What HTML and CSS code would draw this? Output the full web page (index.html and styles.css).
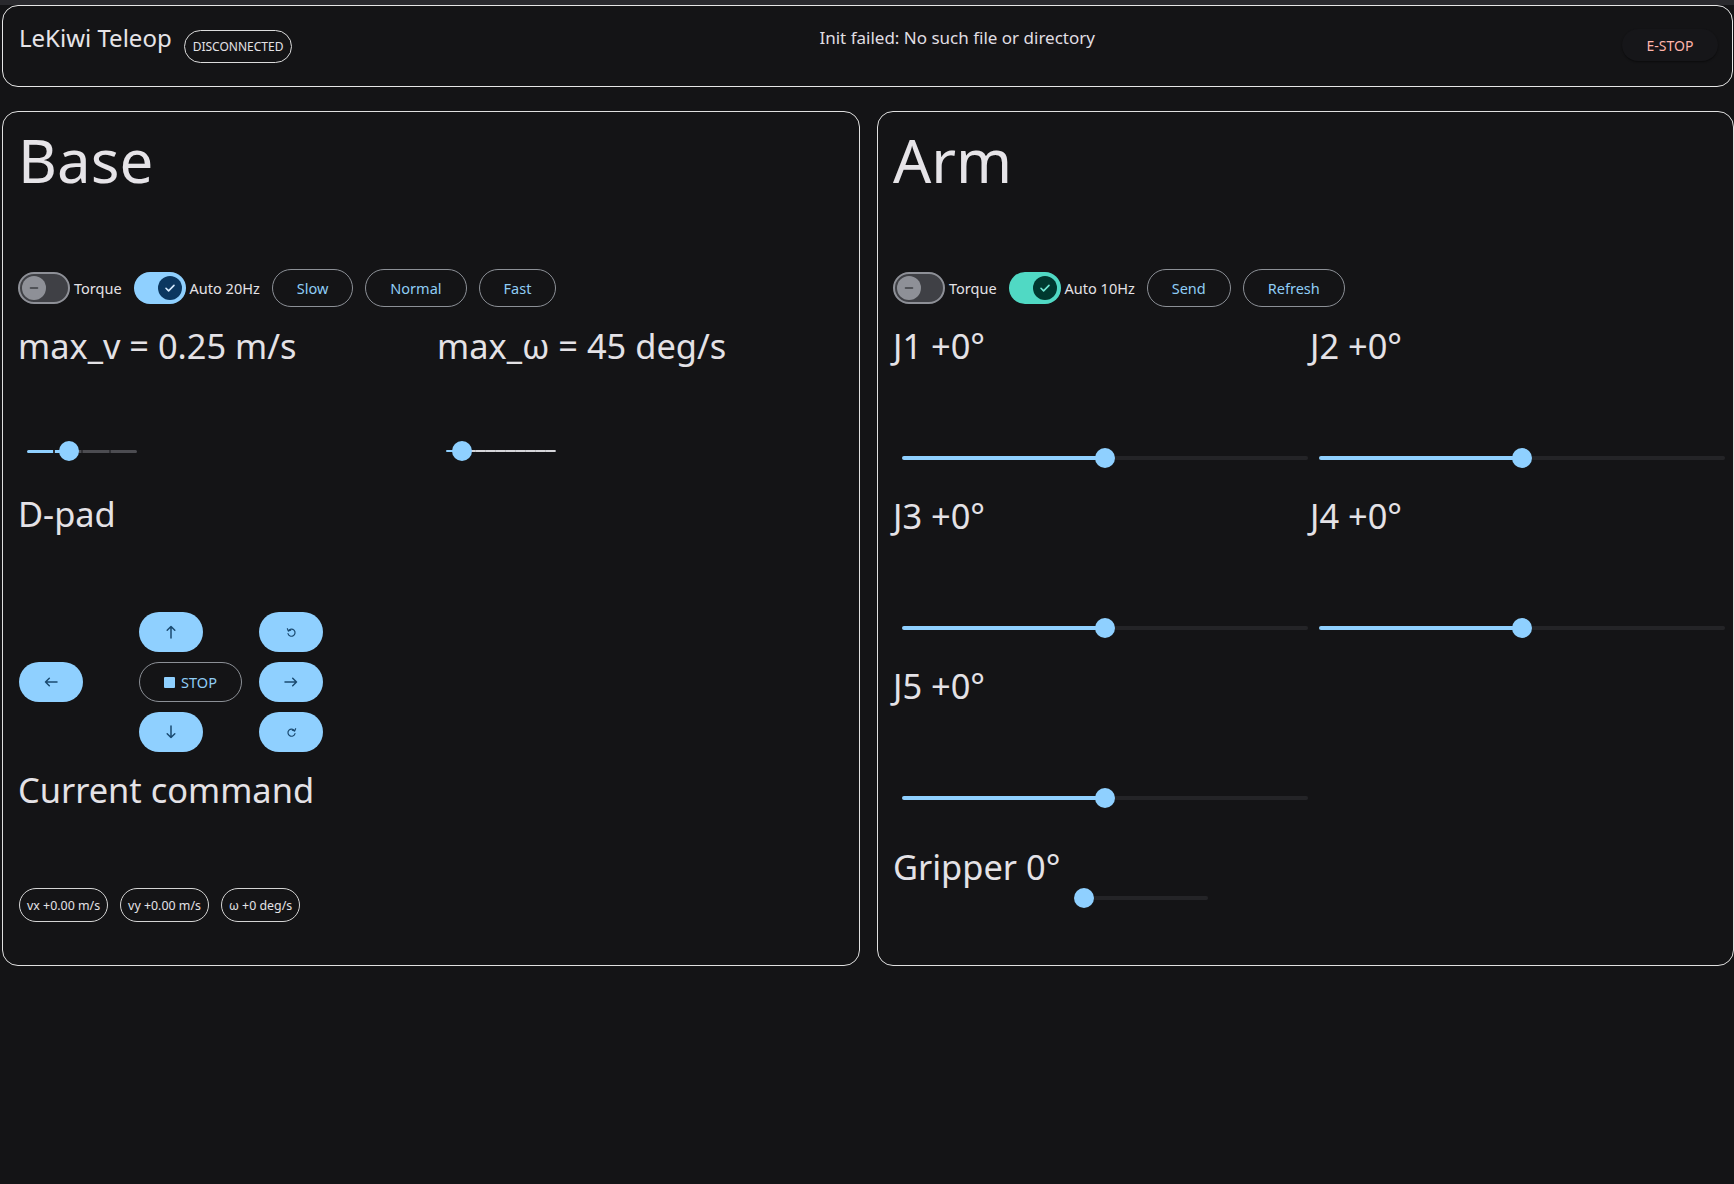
FILE: index.html
```html
<!DOCTYPE html>
<html lang="en">
<head>
<meta charset="utf-8">
<title>LeKiwi Teleop</title>
<link rel="stylesheet" href="styles.css">
</head>
<body>
<div class="app">
  <header class="topbar">
    <div class="brand">
      <span class="title">LeKiwi Teleop</span>
      <span class="badge">DISCONNECTED</span>
    </div>
    <div class="status">Init failed: No such file or directory</div>
    <button class="estop">E-STOP</button>
  </header>

  <main class="panels">
    <section class="panel">
      <h1 class="panel-title">Base</h1>
      <div class="controls">
        <label class="toggle">
          <span class="switch off"><span class="thumb"><svg viewBox="0 0 16 16" width="16" height="16"><path d="M4.5 8h7" stroke="#3d3e43" stroke-width="1.6" stroke-linecap="round"/></svg></span></span>
          <span>Torque</span>
        </label>
        <label class="toggle">
          <span class="switch on blue"><span class="thumb"><svg viewBox="0 0 16 16" width="16" height="16"><path d="M4 8.3l2.6 2.6L12 5.4" fill="none" stroke="#d6ebff" stroke-width="1.6" stroke-linecap="round" stroke-linejoin="round"/></svg></span></span>
          <span>Auto 20Hz</span>
        </label>
        <button class="btn">Slow</button>
        <button class="btn">Normal</button>
        <button class="btn">Fast</button>
      </div>

      <div class="limits">
        <div class="field">
          <div class="heading">max_v = 0.25 m/s</div>
          <div class="slider mini ticks dark" style="--v:0.38"><div class="track"></div><div class="thumb"></div></div>
        </div>
        <div class="field">
          <div class="heading">max_ω = 45 deg/s</div>
          <div class="slider mini ticks light" style="--v:0.145"><div class="track"></div><div class="thumb"></div></div>
        </div>
      </div>

      <h2 class="heading section">D-pad</h2>
      <div class="dpad">
        <button class="pad up" aria-label="forward"><svg viewBox="0 0 16 16" width="16" height="16"><path d="M8 14V2.5M4.2 6.3L8 2.5l3.8 3.8" fill="none" stroke="#1b4a70" stroke-width="1.5" stroke-linecap="round" stroke-linejoin="round"/></svg></button>
        <button class="pad ccw" aria-label="rotate left"><svg viewBox="0 0 12 12" width="11" height="11"><path d="M2.6 4.2A3.9 3.9 0 1 1 2.2 7.2" fill="none" stroke="#1b4a70" stroke-width="1.3" stroke-linecap="round"/><path d="M1.5 1.9l1.1 2.4 2.5-0.7" fill="none" stroke="#1b4a70" stroke-width="1.3" stroke-linecap="round" stroke-linejoin="round"/></svg></button>
        <button class="pad left" aria-label="left"><svg viewBox="0 0 16 16" width="16" height="16"><path d="M14 8H2.5M6.3 4.2L2.5 8l3.8 3.8" fill="none" stroke="#1b4a70" stroke-width="1.5" stroke-linecap="round" stroke-linejoin="round"/></svg></button>
        <button class="stop"><span class="sq"></span>STOP</button>
        <button class="pad right" aria-label="right"><svg viewBox="0 0 16 16" width="16" height="16"><path d="M2 8h11.5M9.7 4.2L13.5 8l-3.8 3.8" fill="none" stroke="#1b4a70" stroke-width="1.5" stroke-linecap="round" stroke-linejoin="round"/></svg></button>
        <button class="pad down" aria-label="back"><svg viewBox="0 0 16 16" width="16" height="16"><path d="M8 2v11.5M4.2 9.7L8 13.5l3.8-3.8" fill="none" stroke="#1b4a70" stroke-width="1.5" stroke-linecap="round" stroke-linejoin="round"/></svg></button>
        <button class="pad cw" aria-label="rotate right"><svg viewBox="0 0 12 12" width="11" height="11"><path d="M9.4 4.2A3.9 3.9 0 1 0 9.8 7.2" fill="none" stroke="#1b4a70" stroke-width="1.3" stroke-linecap="round"/><path d="M10.5 1.9L9.4 4.3l-2.5-0.7" fill="none" stroke="#1b4a70" stroke-width="1.3" stroke-linecap="round" stroke-linejoin="round"/></svg></button>
      </div>

      <h2 class="heading section cmd">Current command</h2>
      <div class="chips">
        <span class="chip">vx +0.00 m/s</span>
        <span class="chip">vy +0.00 m/s</span>
        <span class="chip">ω +0 deg/s</span>
      </div>
    </section>

    <section class="panel">
      <h1 class="panel-title">Arm</h1>
      <div class="controls">
        <label class="toggle">
          <span class="switch off"><span class="thumb"><svg viewBox="0 0 16 16" width="16" height="16"><path d="M4.5 8h7" stroke="#3d3e43" stroke-width="1.6" stroke-linecap="round"/></svg></span></span>
          <span>Torque</span>
        </label>
        <label class="toggle">
          <span class="switch on teal"><span class="thumb"><svg viewBox="0 0 16 16" width="16" height="16"><path d="M4 8.3l2.6 2.6L12 5.4" fill="none" stroke="#6fe6d2" stroke-width="1.6" stroke-linecap="round" stroke-linejoin="round"/></svg></span></span>
          <span>Auto 10Hz</span>
        </label>
        <button class="btn">Send</button>
        <button class="btn">Refresh</button>
      </div>

      <div class="joints">
        <div class="joint"><div class="heading">J1 +0°</div><div class="slider" style="--v:0.5"><div class="track"></div><div class="thumb"></div></div></div>
        <div class="joint"><div class="heading">J2 +0°</div><div class="slider" style="--v:0.5"><div class="track"></div><div class="thumb"></div></div></div>
        <div class="joint"><div class="heading">J3 +0°</div><div class="slider" style="--v:0.5"><div class="track"></div><div class="thumb"></div></div></div>
        <div class="joint"><div class="heading">J4 +0°</div><div class="slider" style="--v:0.5"><div class="track"></div><div class="thumb"></div></div></div>
        <div class="joint"><div class="heading">J5 +0°</div><div class="slider" style="--v:0.5"><div class="track"></div><div class="thumb"></div></div></div>
      </div>

      <div class="gripper">
        <div class="heading">Gripper 0°</div>
        <div class="slider grip" style="--v:0"><div class="track"></div><div class="thumb"></div></div>
      </div>
    </section>
  </main>
</div>
</body>
</html>
```

FILE: styles.css
```css
* { box-sizing: border-box; }

html, body {
  margin: 0;
  padding: 0;
}

body {
  width: 1734px;
  height: 1184px;
  overflow: hidden;
  background: #141416;
  color: #e4e2e6;
  font-family: "Noto Sans", "Open Sans", sans-serif;
}

.app {
  height: 100%;
  border-top: 5px solid #29292d;
}

/* ---------- top bar ---------- */
.topbar {
  margin-left: 2px;
  width: 1731px;
  height: 82px;
  border: 1px solid #e6e6e6;
  border-radius: 16px;
  display: flex;
  align-items: center;
  padding: 0 14px 0 16px;
}

.brand {
  display: flex;
  align-items: center;
  gap: 12px;
}

.title {
  font-size: 24px;
  line-height: 30px;
  color: #e6e4e8;
  margin-bottom: 16px;
}

.badge {
  height: 33px;
  padding: 0 8px;
  border: 1px solid #dcdcdc;
  border-radius: 17px;
  display: inline-flex;
  align-items: center;
  font-size: 12px;
  color: #e4e2e6;
}

.status {
  flex: 1;
  text-align: center;
  font-size: 17px;
  color: #e0dfe3;
  margin-bottom: 17px;
}

.estop {
  width: 96px;
  height: 32px;
  border: none;
  border-radius: 16px;
  background: #161619;
  box-shadow: 0 1px 2px rgba(0, 0, 0, 0.45);
  color: #ffb4ab;
  font: 400 14px "Noto Sans", sans-serif;
  margin-bottom: 2px;
}

/* ---------- panels ---------- */
.panels {
  display: grid;
  grid-template-columns: 858px 857px;
  column-gap: 17px;
  margin: 24px 0 0 2px;
}

.panel {
  border: 1px solid #e0e0e0;
  border-radius: 16px;
  padding: 16px 15px 43px;
  min-width: 0;
}

.panel-title {
  margin: 0;
  font-size: 60px;
  line-height: 64px;
  font-weight: 400;
  color: #e6e4e8;
}

.heading {
  margin: 0;
  font-size: 34.4px;
  line-height: 44px;
  font-weight: 400;
  color: #e4e2e6;
  white-space: nowrap;
}

/* controls row */
.controls {
  display: flex;
  align-items: center;
  gap: 12px;
  height: 40px;
  margin-top: 76px;
}

.toggle {
  display: flex;
  align-items: center;
  gap: 4px;
  font-size: 14.5px;
  color: #e4e2e6;
}

.switch {
  width: 52px;
  height: 32px;
  border-radius: 16px;
  display: flex;
  align-items: center;
  padding: 0 4px;
}

.switch .thumb {
  width: 24px;
  height: 24px;
  border-radius: 50%;
  display: flex;
  align-items: center;
  justify-content: center;
}

.switch.off {
  background: #3f4045;
  border: 2px solid #8e9097;
  padding: 0 2px;
}

.switch.off .thumb { background: #8e9097; }

.switch.on { justify-content: flex-end; }

.switch.blue { background: #8fd0ff; }
.switch.blue .thumb { background: #0b3760; }

.switch.teal { background: #50d9c4; }
.switch.teal .thumb { background: #00382f; }

.btn {
  height: 38px;
  padding: 0 24px;
  border: 1px solid #8c9096;
  border-radius: 19px;
  background: transparent;
  color: #8fcdf5;
  font: 400 14.5px "Noto Sans", sans-serif;
}

/* limits */
.limits {
  display: grid;
  grid-template-columns: 407px 407px;
  column-gap: 12px;
  margin-top: 16px;
}

/* sliders */
.slider {
  position: relative;
  height: 20px;
  padding-top: 8px;
}

.slider .track {
  height: 4px;
  border-radius: 2px;
  background: linear-gradient(to right, #8fd0ff calc(var(--v) * 100%), #242427 0);
}

.slider .thumb {
  position: absolute;
  top: 0;
  left: calc(var(--v) * 100% - 10px);
  width: 20px;
  height: 20px;
  border-radius: 50%;
  background: #8fd0ff;
}

.slider.mini {
  width: 110px;
  margin: 73px 0 0 9px;
}

.slider.mini.dark .track {
  height: 3px;
  margin-top: 1px;
  background:
    repeating-linear-gradient(to right, transparent 0 26px, #303034 26px 28px),
    linear-gradient(to right, #8fd0ff calc(var(--v) * 100%), #4c4c51 0);
}

.slider.mini.light .track {
  height: 2px;
  margin-top: 1px;
  background:
    repeating-linear-gradient(to right, transparent 0 9px, #bcbcc0 9px 10px),
    linear-gradient(to right, #8fd0ff calc(var(--v) * 100%), #d6d6da 0);
}

/* sections */
.section { margin-top: 31px; }
.section.cmd { margin-top: 16px; }

/* d-pad */
.dpad {
  display: grid;
  grid-template-columns: 120px 120px 64px;
  grid-template-rows: repeat(3, 40px);
  row-gap: 10px;
  margin-top: 76px;
  padding-left: 1px;
}

.pad {
  width: 64px;
  height: 40px;
  border: none;
  border-radius: 20px;
  background: #8fd0ff;
  display: flex;
  align-items: center;
  justify-content: center;
  padding: 0;
}

.pad.up { grid-row: 1; grid-column: 2; }
.pad.ccw { grid-row: 1; grid-column: 3; }
.pad.left { grid-row: 2; grid-column: 1; }
.stop { grid-row: 2; grid-column: 2; }
.pad.right { grid-row: 2; grid-column: 3; }
.pad.down { grid-row: 3; grid-column: 2; }
.pad.cw { grid-row: 3; grid-column: 3; }

.stop {
  width: 103px;
  height: 40px;
  border: 1px solid #8c9096;
  border-radius: 20px;
  background: transparent;
  color: #8fcdf5;
  font: 400 14.5px "Noto Sans", sans-serif;
  display: flex;
  align-items: center;
  justify-content: center;
  gap: 6px;
  padding: 0;
}

.stop .sq {
  width: 11px;
  height: 11px;
  border-radius: 1px;
  background: #8fd0ff;
}

/* chips */
.chips {
  display: flex;
  gap: 12px;
  margin-top: 76px;
  padding-left: 1px;
}

.chip {
  height: 34px;
  padding: 0 7px;
  border: 1px solid #d4d4d4;
  border-radius: 17px;
  display: inline-flex;
  align-items: center;
  font-size: 12.4px;
  color: #e4e2e6;
}

/* arm joints */
.joints {
  display: grid;
  grid-template-columns: 417px 417px;
  row-gap: 26px;
  margin-top: 16px;
}

.joint .slider {
  width: 406px;
  margin: 80px 0 0 9px;
}

.gripper {
  display: flex;
  align-items: flex-start;
  margin-top: 37px;
}

.slider.grip {
  width: 124px;
  margin: 43px 0 0 24px;
}
```
